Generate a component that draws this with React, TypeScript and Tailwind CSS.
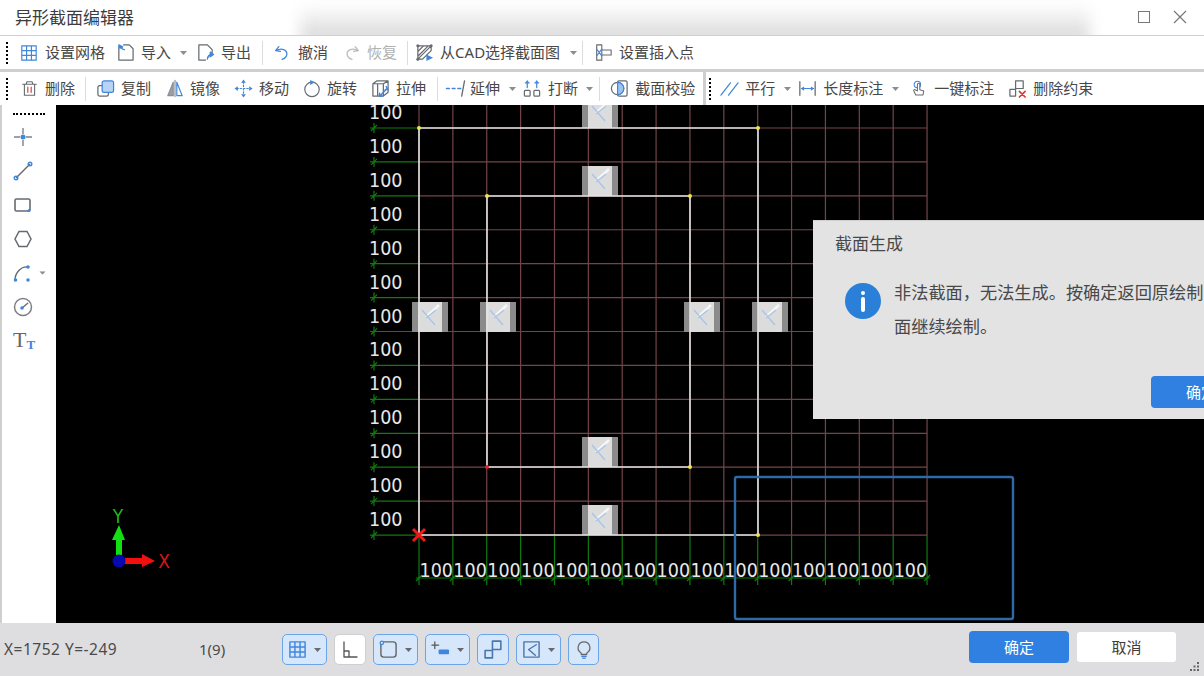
import type { ReactNode } from "react";

const B = "#3f86dc";
const G = "#666a70";
const cols = Array.from({ length: 16 }, (_, i) => 419 + i * 33.87);
const rows = Array.from({ length: 13 }, (_, i) => 128 + i * 33.92);
const markers = [[600, 113], [600, 181], [430, 317], [498, 317], [702, 317], [770, 317], [600, 452], [600, 520]];

function Ico({ w = 19, h = 19, box = "0 0 20 20", children }: { w?: number; h?: number; box?: string; children: ReactNode }) {
  return (
    <svg width={w} height={h} viewBox={box} fill="none" strokeWidth="1.3" strokeLinecap="round" strokeLinejoin="round" className="shrink-0">
      {children}
    </svg>
  );
}

function Caret({ className = "", dark = false }: { className?: string; dark?: boolean }) {
  return (
    <svg width="7" height="4" viewBox="0 0 7 4" className={`shrink-0 ${className}`}>
      <path d="M0 0h7L3.5 4z" fill={dark ? "#666a70" : "#8a8d92"} />
    </svg>
  );
}

function Sep({ className = "" }: { className?: string }) {
  return <div className={`w-px h-[24px] bg-[#dcdcdc] shrink-0 ${className}`} />;
}

function Grip({ className = "" }: { className?: string }) {
  return <div className={`h-[22px] border-l-2 border-dotted border-black shrink-0 ${className}`} />;
}

function Tool({ icon, label, gap, className = "", muted = false }: { icon: ReactNode; label: string; gap: string; className?: string; muted?: boolean }) {
  return (
    <div className={`flex items-center shrink-0 whitespace-nowrap ${gap} ${className}`}>
      {icon}
      <span className={`text-[15px] leading-none ${muted ? "text-[#b0b0b0]" : "text-[#484848]"}`}>{label}</span>
    </div>
  );
}

const icons = {
  grid: (
    <Ico w={18} h={18}>
      <path d="M2 2h16v16H2zM7.3 2v16M12.7 2v16M2 7.3h16M2 12.7h16" stroke={B} />
    </Ico>
  ),
  imp: (
    <Ico>
      <path d="M8 2h6l4 4v12H3V5" stroke={G} />
      <path d="M3 2l4 2-1.5 1.5L3 5z" fill={B} stroke={B} />
      <path d="M5 4c1 2 2 3 4 3" stroke={B} />
    </Ico>
  ),
  exp: (
    <Ico>
      <path d="M10 18H3V2h9l5 5v3" stroke={G} />
      <path d="M12 17c0-3 2-5 4-5M15 9.5l3.5 2.5-3.5 2.5z" stroke={B} fill={B} />
    </Ico>
  ),
  undo: (
    <Ico w={16} h={16}>
      <path d="M6 2L2 7l6 1M3 7c6-4 14-1 13 5-.5 3-3 5-6 6" stroke={B} strokeWidth="1.6" />
    </Ico>
  ),
  redo: (
    <Ico w={16} h={16}>
      <path d="M14 2l4 5-6 1M17 7C11 3 3 6 4 12c.5 3 3 5 6 6" stroke="#bbbbbb" strokeWidth="1.6" />
    </Ico>
  ),
  cad: (
    <Ico>
      <path d="M3 3h14L3 17zM3 9l6-6M3 14L14 3M8 17l9-9v-5M3 17h5" stroke={G} />
      <circle cx="3" cy="3" r="1.6" fill={G} />
      <circle cx="17" cy="3" r="1.6" fill={G} />
      <circle cx="3" cy="17" r="1.6" fill={G} />
      <path d="M12 12l7 3.500-7 3.500z" fill={B} />
    </Ico>
  ),
  insert: (
    <Ico w={17} h={19}>
      <path d="M2 1h6v18H2zM8 7h11v6H8" stroke={G} />
      <path d="M2 6l6 8M8 6l-6 8" stroke={B} />
    </Ico>
  ),
  trash: (
    <Ico w={17} h={19}>
      <path d="M2 5h16M6 5l1-3h6l1 3M4 5v13h12V5" stroke={G} />
      <path d="M8 8.500v6M12 8.500v6" stroke="#d9534f" strokeWidth="1.5" />
    </Ico>
  ),
  copy: (
    <Ico>
      <rect x="2" y="7" width="11" height="11" rx="2" stroke={G} />
      <rect x="6.500" y="2" width="12" height="12" rx="2" fill="#b8d3f3" stroke={B} />
    </Ico>
  ),
  mirror: (
    <Ico w={18} h={19}>
      <path d="M8 3L2 18h6z" fill="#9aa0a6" stroke="#8a8f95" />
      <path d="M12 3l6 15h-6z" stroke={B} />
      <path d="M10 1v18" stroke="#8a8f95" />
    </Ico>
  ),
  move: (
    <Ico>
      <path d="M10 3v14M3 10h14" stroke={B} strokeDasharray="1.500 2" />
      <path d="M10 .5L7.500 4h5zM10 19.500L7.500 16h5zM.5 10L4 7.500v5zM19.500 10L16 7.500v5z" fill={B} />
    </Ico>
  ),
  rotate: (
    <Ico w={18} h={19}>
      <circle cx="10" cy="11" r="8" stroke={G} />
      <path d="M8 .5L13 3l-5 3z" fill={B} />
    </Ico>
  ),
  stretch: (
    <Ico>
      <path d="M2 5h11v13H2zM2 5l4-3h12v12l-5 4M13 5l5-3M7 5v13" stroke={G} />
      <path d="M10 17l7-7M16 8l2 3-3 0M9 15l0 3 3 0" stroke={B} strokeWidth="1.5" />
    </Ico>
  ),
  extend: (
    <Ico w={21} h={19} box="0 0 21 20">
      <path d="M1 10h3M7 10h3" stroke={B} strokeWidth="1.5" />
      <path d="M13 10h3" stroke={B} strokeWidth="1.5" />
      <path d="M20 2l-3 16" stroke={G} strokeWidth="1.4" />
    </Ico>
  ),
  brk: (
    <Ico w={20} h={19}>
      <rect x="2" y="12" width="6" height="6" rx="1" stroke={G} />
      <rect x="12" y="12" width="6" height="6" rx="1" stroke={G} />
      <path d="M5 9V4M15 9V4M3 4h4M13 4h4" stroke={B} />
      <path d="M5 1L3 4h4zM15 1l-2 3h4z" fill={B} />
    </Ico>
  ),
  check: (
    <Ico>
      <rect x="8" y="2" width="10" height="16" rx="1.500" stroke={G} />
      <circle cx="8" cy="10" r="6.500" fill="#ffffff" stroke={G} />
      <path d="M8 3.500a6.500 6.500 0 0 1 0 13z" fill="#9dc3ef" stroke={B} />
    </Ico>
  ),
  parallel: (
    <Ico>
      <path d="M1 17L11 4M9 17L19 4" stroke={B} />
    </Ico>
  ),
  dim: (
    <Ico w={17} h={19}>
      <path d="M1 2v16M19 2v16" stroke={G} strokeWidth="1.5" />
      <path d="M3 10h14" stroke={B} />
      <path d="M2 10l4-2.500v5zM18 10l-4-2.500v5z" fill={B} />
    </Ico>
  ),
  hand: (
    <Ico w={16} h={19}>
      <circle cx="8" cy="5" r="4" stroke={B} />
      <path d="M8 5v8l-3-1.500c-1-.5-2 .5-1.500 1.500L6 18h9l1-5-5-1.500V5c0-2-3-2-3 0z" stroke={G} fill="#ffffff" />
    </Ico>
  ),
  delc: (
    <Ico>
      <path d="M2 11h6v7H2zM8 11V2h8v8h-8" stroke={G} />
      <path d="M12 13l6 6M18 13l-6 6" stroke="#e0352b" strokeWidth="1.7" />
    </Ico>
  ),
};

function SideIcon({ children }: { children: ReactNode }) {
  return (
    <svg width="20" height="20" viewBox="0 0 20 20" fill="none" strokeWidth="1.4" className="shrink-0">
      {children}
    </svg>
  );
}

function StatusBtn({ children, caret = false, on = true, w }: { children: ReactNode; caret?: boolean; on?: boolean; w: string }) {
  return (
    <div className={`${w} h-[31px] rounded-[5px] border-[1.5px] flex items-center justify-center gap-[7px] shrink-0 ${on ? "bg-[#d6e6fb] border-[#6aa5ea]" : "bg-white border-[#cfcfcf]"}`}>
      {children}
      {caret && <Caret dark />}
    </div>
  );
}

function Drawing() {
  return (
    <svg viewBox="56 105 1148 518" width="1148" height="518" className="block" style={{ fontFamily: "'DejaVu Sans', sans-serif", fontStretch: "condensed" }}>
      <rect x="56" y="105" width="1148" height="518" fill="#000000" />
      {rows.map((y) => (
        <g key={y}>
          <path d={`M419 ${y}H927`} stroke="#74444a" strokeWidth="1.2" />
          <path d={`M370 ${y}H419M374 ${y - 5}V${y + 5}M371 ${y + 3}L377 ${y - 3}`} stroke="#107a10" strokeWidth="1.2" />
        </g>
      ))}
      {cols.map((x) => (
        <g key={x}>
          <path d={`M${x} 105V535`} stroke="#74444a" strokeWidth="1.2" />
          <path d={`M${x} 535V585M${x - 3} 581L${x + 3} 575`} stroke="#107a10" strokeWidth="1.2" fill="none" />
        </g>
      ))}
      <path d="M416 578H930" stroke="#107a10" strokeWidth="1.2" />
      {markers.map(([x, y]) => (
        <g key={`${x}-${y}`}>
          <rect x={x - 18} y={y - 15} width="36" height="30" fill="#8b8b8b" />
          <rect x={x - 12} y={y - 15} width="24" height="30" fill="#dcdcdc" />
          <path d={`M${x + 9} ${y - 12}L${x - 4} ${y}`} stroke="#f6f6f6" strokeWidth="2.500" />
          <path d={`M${x - 8} ${y - 7}L${x + 5} ${y + 8}M${x - 4} ${y + 1}L${x + 6} ${y - 7}`} stroke="#a9c4e4" strokeWidth="1.3" />
        </g>
      ))}
      <path d="M419 128H758V535H419Z" stroke="#e4e4e4" strokeWidth="1.6" fill="none" />
      <path d="M487 196H690V467H487Z" stroke="#e4e4e4" strokeWidth="1.6" fill="none" />
      {[[419, 128], [758, 128], [487, 196], [690, 196], [690, 467], [758, 535]].map(([x, y]) => (
        <circle key={`${x}${y}`} cx={x} cy={y} r="2" fill="#f0e64a" />
      ))}
      <circle cx="487" cy="467" r="2" fill="#e02020" />
      {rows.map((y) => (
        <text key={y} x="369" y={y - 9} fill="#e8e8e8" fontSize="19.500">100</text>
      ))}
      {cols.slice(0, 15).map((x) => (
        <text key={x} x={x + 0.5} y="577" fill="#e8e8e8" fontSize="19.500">100</text>
      ))}
      <path d="M413 529l12 12M425 529l-12 12" stroke="#f01818" strokeWidth="3" />
      <rect x="735" y="477" width="278" height="142" rx="2" fill="none" stroke="#2f6aa8" strokeWidth="2.400" />
      <path d="M116 555V540H112L119 525L125 540H122V555Z" fill="#12e012" />
      <path d="M125 558H142V554L155 561L142 567V564H125Z" fill="#f01010" />
      <circle cx="119" cy="561" r="6.500" fill="#0808b0" />
      <text x="118" y="523" fill="#1fb81f" fontSize="19" textAnchor="middle">Y</text>
      <text x="164" y="568" fill="#d81818" fontSize="19" textAnchor="middle">X</text>
    </svg>
  );
}

export default function App() {
  return (
    <div
      className="relative w-[1204px] h-[676px] overflow-hidden bg-white flex flex-col"
      style={{ fontFamily: "'Noto Sans', 'Noto Sans CJK SC', sans-serif" }}
    >
      {/* title bar */}
      <div className="relative h-[36px] shrink-0 flex items-center overflow-hidden bg-white border-b border-[#d0d0d0]">
        <div className="absolute left-[300px] w-[790px] top-[4px] bottom-[-8px] bg-gradient-to-b from-white to-[#d4d4d4] blur-[7px]" />
        <span className="relative ml-[15px] text-[17px] leading-none text-[#3c3c3c]">异形截面编辑器</span>
        <div className="relative ml-auto flex items-center mr-[17px] mt-[-1px]">
          <div className="w-[12px] h-[12px] border border-[#777]" />
          <svg width="14" height="14" viewBox="0 0 14 14" className="ml-[23px]">
            <path d="M1 1l12 12M13 1L1 13" stroke="#777" strokeWidth="1.200" />
          </svg>
        </div>
      </div>

      {/* toolbar 1 */}
      <div className="h-[33px] shrink-0 flex items-center">
        <Grip className="ml-[6px]" />
        <Tool icon={icons.grid} label="设置网格" gap="gap-[7px]" className="ml-[12px]" />
        <Tool icon={icons.imp} label="导入" gap="gap-[6px]" className="ml-[11px]" />
        <Caret className="ml-[9px]" />
        <Tool icon={icons.exp} label="导出" gap="gap-[6px]" className="ml-[9px]" />
        <Sep className="ml-[11px]" />
        <Tool icon={icons.undo} label="撤消" gap="gap-[8px]" className="ml-[11px]" />
        <Tool icon={icons.redo} label="恢复" gap="gap-[7px]" className="ml-[16px]" muted />
        <Sep className="ml-[10px]" />
        <Tool icon={icons.cad} label="从CAD选择截面图" gap="gap-[6px]" className="ml-[7px]" />
        <Caret className="ml-[10px]" />
        <Sep className="ml-[5px]" />
        <Tool icon={icons.insert} label="设置插入点" gap="gap-[7px]" className="ml-[12px]" />
      </div>
      <div className="h-[3px] shrink-0 bg-[#cfcfcf]" />

      {/* toolbar 2 */}
      <div className="h-[33px] shrink-0 flex items-center">
        <Grip className="ml-[6px]" />
        <Tool icon={icons.trash} label="删除" gap="gap-[7px]" className="ml-[13px]" />
        <Sep className="ml-[10px]" />
        <Tool icon={icons.copy} label="复制" gap="gap-[6px]" className="ml-[10px]" />
        <Tool icon={icons.mirror} label="镜像" gap="gap-[6px]" className="ml-[15px]" />
        <Tool icon={icons.move} label="移动" gap="gap-[6px]" className="ml-[14px]" />
        <Tool icon={icons.rotate} label="旋转" gap="gap-[6px]" className="ml-[14px]" />
        <Tool icon={icons.stretch} label="拉伸" gap="gap-[6px]" className="ml-[14px]" />
        <Sep className="ml-[11px]" />
        <Tool icon={icons.extend} label="延伸" gap="gap-[4px]" className="ml-[7px]" />
        <Caret className="ml-[9px]" />
        <Tool icon={icons.brk} label="打断" gap="gap-[6px]" className="ml-[6px]" />
        <Caret className="ml-[8px]" />
        <Sep className="ml-[6px]" />
        <Tool icon={icons.check} label="截面校验" gap="gap-[6px]" className="ml-[10px]" />
        <div className="ml-[8px] w-[3px] h-full bg-[#cfcfcf] shrink-0" />
        <Grip className="ml-[3px]" />
        <Tool icon={icons.parallel} label="平行" gap="gap-[6px]" className="ml-[9px]" />
        <Caret className="ml-[9px]" />
        <Tool icon={icons.dim} label="长度标注" gap="gap-[7px]" className="ml-[8px]" />
        <Caret className="ml-[9px]" />
        <Tool icon={icons.hand} label="一键标注" gap="gap-[7px]" className="ml-[12px]" />
        <Tool icon={icons.delc} label="删除约束" gap="gap-[6px]" className="ml-[14px]" />
      </div>

      {/* work area */}
      <div className="flex h-[518px] shrink-0">
        <div className="w-[56px] shrink-0 border-l-2 border-[#cfcfcf] bg-white flex flex-col items-start">
          <div className="ml-[11px] mt-[8px] w-[32px] border-t-2 border-dotted border-black" />
          <div className="ml-[11px] mt-[12px] flex flex-col gap-[14px]">
            <SideIcon>
              <path d="M10 1v6M10 13v6M1 10h6M13 10h6" stroke="#7d8186" />
              <circle cx="10" cy="10" r="2.500" fill={B} />
            </SideIcon>
            <SideIcon>
              <path d="M3 17L17 3" stroke={G} />
              <circle cx="3" cy="17" r="1.800" stroke={B} />
              <circle cx="17" cy="3" r="1.800" stroke={B} />
            </SideIcon>
            <SideIcon>
              <rect x="2" y="4" width="15" height="12" rx="1.500" stroke={G} strokeWidth="1.600" />
              <circle cx="16" cy="15.500" r="1.500" fill={B} />
            </SideIcon>
            <SideIcon>
              <path d="M6 2.500h8L18 10l-4 7.500H6L2 10z" stroke={G} strokeWidth="1.500" />
            </SideIcon>
            <div className="flex items-center gap-[6px]">
              <SideIcon>
                <path d="M2 17C2 10 8 3 15 4" stroke={G} />
                <circle cx="2.500" cy="17" r="1.800" fill={B} />
                <circle cx="15" cy="4" r="1.800" fill={B} />
                <circle cx="15" cy="17" r="1.800" fill={B} />
              </SideIcon>
              <Caret className="scale-90" />
            </div>
            <SideIcon>
              <circle cx="10" cy="10" r="8.500" stroke="#7d8186" strokeWidth="1.500" />
              <path d="M9 11l6-5" stroke={G} />
              <circle cx="9" cy="11" r="1.800" fill={B} />
            </SideIcon>
            <div className="flex items-end h-[20px] text-[#666] leading-none" style={{ fontFamily: "'Liberation Serif', serif" }}>
              <span className="text-[22px] leading-none">T</span>
              <span className="text-[13px] leading-none font-bold text-[#3f86dc]">T</span>
            </div>
          </div>
        </div>
        <div className="flex-1 min-w-0">
          <Drawing />
        </div>
      </div>

      {/* status bar */}
      <div className="h-[53px] shrink-0 bg-[#dedee0] flex items-center relative">
        <span className="ml-[4px] w-[195px] text-[15.500px] tracking-[0.5px] text-[#4a4a4a] whitespace-nowrap">X=1752 Y=-249</span>
        <span className="w-[83px] text-[15px] text-[#4a4a4a]">1(9)</span>
        <div className="flex items-center gap-[7px]">
          <StatusBtn w="w-[45px]" caret>
            <Ico w={19} h={19}>
              <path d="M2 2h16v16H2zM7.300 2v16M12.700 2v16M2 7.300h16M2 12.700h16" stroke={B} strokeWidth="1.500" />
            </Ico>
          </StatusBtn>
          <StatusBtn w="w-[32px]" on={false}>
            <Ico w={20} h={20}>
              <path d="M4 2v15h13M4 11h5v6" stroke="#555" />
            </Ico>
          </StatusBtn>
          <StatusBtn w="w-[45px]" caret>
            <Ico w={19} h={19}>
              <rect x="2" y="2" width="16" height="16" rx="3" stroke="#666" strokeWidth="1.500" />
              <circle cx="3" cy="3" r="1.800" fill="#d6e6fb" stroke={B} />
            </Ico>
          </StatusBtn>
          <StatusBtn w="w-[45px]" caret>
            <Ico w={19} h={19}>
              <path d="M4 2v7M1 5.500h7" stroke="#555" />
              <rect x="8" y="10" width="11" height="5" rx="1" fill={B} />
            </Ico>
          </StatusBtn>
          <StatusBtn w="w-[32px]">
            <Ico w={21} h={21}>
              <path d="M2 11h7v7H2zM9 11V2h8v8H9" stroke="#4a78ac" strokeWidth="1.500" />
            </Ico>
          </StatusBtn>
          <StatusBtn w="w-[45px]" caret>
            <Ico w={19} h={19}>
              <rect x="2" y="2" width="16" height="16" stroke="#4a78ac" strokeWidth="1.500" />
              <path d="M15 5L7 10l7 6" stroke="#4a78ac" strokeWidth="1.500" />
            </Ico>
          </StatusBtn>
          <StatusBtn w="w-[31px]">
            <Ico w={18} h={22}>
              <path d="M10 1a6.500 6.500 0 0 0-3.500 12c.5.5.5 1 .5 2h6c0-1 0-1.500.5-2A6.500 6.500 0 0 0 10 1z" stroke="#666" strokeWidth="1.400" />
              <path d="M7.500 17h5M8.500 19h3" stroke={B} strokeWidth="1.400" />
            </Ico>
          </StatusBtn>
        </div>
        <div className="absolute left-[969px] top-[8px] flex items-center gap-[8px]">
          <button className="w-[100px] h-[32px] rounded-[4px] bg-[#2f80e0] text-white text-[15px] flex items-center justify-center">确定</button>
          <button className="w-[99px] h-[30px] rounded-[3px] bg-white text-[#3c3c3c] text-[15px] flex items-center justify-center">取消</button>
        </div>
        <svg width="10" height="10" viewBox="0 0 10 10" className="absolute right-[5px] bottom-[5px]">
          <path d="M8 1h2v2H8zM4.500 4.500h2v2h-2zM8 4.500h2v2H8zM1 8h2v2H1zM4.500 8h2v2h-2zM8 8h2v2H8z" fill="#666" />
        </svg>
      </div>

      {/* message box */}
      <div className="absolute left-[813px] top-[220px] w-[480px] h-[199px] bg-[#e3e3e3] border-t border-[#cfcfcf] text-[#484848]">
        <div className="absolute left-[22px] top-[13px] text-[17px] leading-[20px]">截面生成</div>
        <div className="absolute left-[32px] top-[62px] w-[36px] h-[36px] rounded-full bg-[#2a7fd8] flex flex-col items-center justify-center gap-[2px]">
          <div className="w-[4px] h-[4px] rounded-full bg-white" />
          <div className="w-[4px] h-[15px] rounded-[2px] bg-white" />
        </div>
        <div className="absolute left-[81px] top-[55px] text-[17.200px] leading-[34px] whitespace-nowrap">
          <div>非法截面，无法生成。按确定返回原绘制截</div>
          <div>面继续绘制。</div>
        </div>
        <button className="absolute left-[338px] top-[155px] w-[100px] h-[32px] rounded-[4px] bg-[#2f80e0] text-white text-[15px] flex items-center justify-center">确定</button>
      </div>
    </div>
  );
}
